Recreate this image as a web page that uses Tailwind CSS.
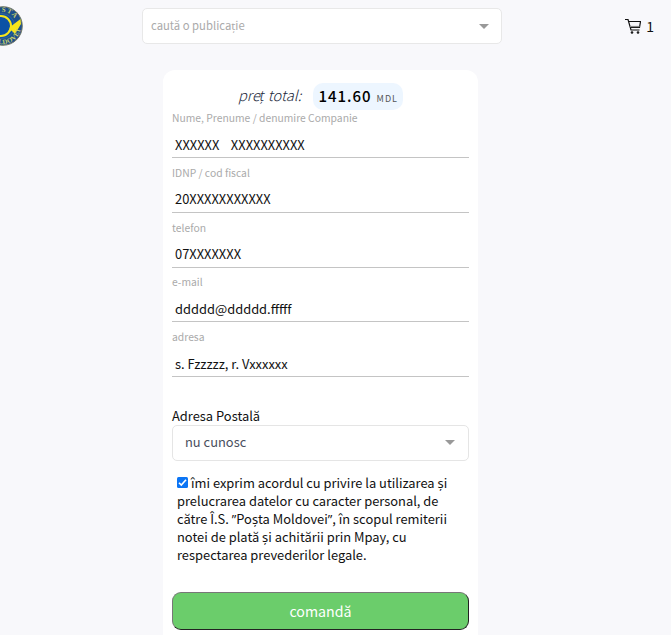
<!DOCTYPE html>
<html lang="ro">
  <head>
    <title>Poșta Moldovei</title>
    <meta charset="UTF-8" />
    <meta name="viewport" content="width=device-width, initial-scale=1.0" />
    <script src="https://cdn.jsdelivr.net/npm/@tailwindcss/browser@4"></script>
  </head>
  <body
    class="bg-[#f8f8fb] text-[#111] h-[635px] overflow-hidden font-['Noto_Sans_CJK_SC','Noto_Sans',sans-serif]"
  >
    <header class="flex h-[70px] items-start">
      <!-- Logo -->
      <div class="w-[142px] pt-[6px]">
        <svg class="-ml-[17px]" width="40" height="40" viewBox="0 0 40 40">
          <circle cx="20" cy="20" r="19.3" fill="#1c4f8c" stroke="#777c67" />
          <circle cx="19" cy="20" r="12.5" fill="#0c52a5" stroke="#496e8c" stroke-width=".7" />
          <circle cx="18" cy="20" r="10" fill="none" stroke="#f6e51b" stroke-width="2" />
          <path d="M27 21 37.5 13 38 18 32 28 28.5 24.5 25 27" fill="#f6e51b" />
          <path id="top" d="M5.5 20a14 14 0 0 1 28 0" fill="none" />
          <path id="bottom" d="M1.5 20a18.2 18.2 0 0 0 36.4 0" fill="none" />
          <g fill="#c9cf6a" font-family="Liberation Serif, serif" font-weight="bold" font-size="7">
            <text><textPath href="#top" startOffset="23" text-anchor="middle" letter-spacing="1">POSTA</textPath></text>
            <text><textPath href="#bottom" startOffset="32" text-anchor="middle" letter-spacing=".3">MOLDOVEI</textPath></text>
          </g>
        </svg>
      </div>

      <div
        class="mt-2 flex h-9 w-[360px] items-center justify-between rounded-[5px] border border-[#e8e8e8] bg-white pl-2 pr-3"
      >
        <span class="-mt-[2px] text-[11.3px] leading-4 text-[#aaa]">caută o publicație</span>
        <span class="border-x-[5px] border-t-[5px] border-x-transparent border-t-[#999]"></span>
      </div>

      <!-- Cart -->
      <div class="ml-auto mr-[17px] mt-[17px] flex items-start gap-[5px]">
        <svg class="mt-[2px]" width="16" height="16" viewBox="0 0 16 16" fill="none" stroke="#111" stroke-width="1.2">
          <path d="M0 .5h3l3 10.5h8.5M3.5 2.5h12l-1 6H5.5" />
          <path d="M5 7.5h9.5" stroke="#888" />
          <circle cx="7" cy="13.5" r="1" fill="#111" stroke-width=".6" />
          <circle cx="13" cy="13.5" r="1" fill="#111" stroke-width=".6" />
        </svg>
        <span class="-mt-px text-[14px] leading-5">1</span>
      </div>
    </header>

    <main class="ml-[163px] h-[565px] w-[315px] rounded-t-[12px] bg-white px-[9px] pt-[13px]">
      <div class="flex h-[27px] items-center justify-center gap-3">
        <span class="-mt-[3px] text-[14.6px] font-light italic leading-5 text-[#222a3c]">preț total:</span>
        <span class="flex h-[27px] items-baseline gap-[5px] rounded-[10px] bg-[#edf6ff] px-[5px] leading-[25px]">
          <span class="text-[15px] font-medium tracking-[1px] text-black">141.60</span>
          <span class="text-[9px] tracking-[1px] text-[#555]">MDL</span>
        </span>
      </div>

      <form>
        <div class="h-[54.75px]">
          <label class="block h-[15px] text-[10.35px] leading-[15px] text-[#aaa]">Nume, Prenume / denumire Companie</label>
          <div class="h-[33px] whitespace-pre border-b border-[#c4c4c4] pl-[3px] pt-[10px] text-[12.9px] leading-5">XXXXXX    XXXXXXXXXX</div>
        </div>
        <div class="h-[54.75px]">
          <label class="block h-[15px] text-[10.35px] leading-[15px] text-[#aaa]">IDNP / cod fiscal</label>
          <div class="h-[33px] border-b border-[#c4c4c4] pl-[3px] pt-[9px] text-[12.9px] leading-5">20XXXXXXXXXXX</div>
        </div>
        <div class="h-[54.75px]">
          <label class="block h-[15px] text-[10.35px] leading-[15px] text-[#aaa]">telefon</label>
          <div class="h-[33px] border-b border-[#c4c4c4] pl-[3px] pt-[9px] text-[12.9px] leading-5">07XXXXXXX</div>
        </div>
        <div class="h-[54.75px]">
          <label class="block h-[15px] text-[10.35px] leading-[15px] text-[#aaa]">e-mail</label>
          <div class="h-[33px] border-b border-[#c4c4c4] pl-[3px] pt-[10px] text-[12.9px] leading-5">ddddd@ddddd.fffff</div>
        </div>
        <div class="h-[54.75px]">
          <label class="block h-[15px] text-[10.35px] leading-[15px] text-[#aaa]">adresa</label>
          <div class="h-[33px] border-b border-[#c4c4c4] pl-[3px] pt-[10px] text-[12.9px] leading-5">s. Fzzzzz, r. Vxxxxxx</div>
        </div>

        <label class="mt-[23px] block h-[18px] text-[12.9px] leading-[18px]">Adresa Postală</label>
        <div
          class="flex h-9 items-center justify-between rounded-[5px] border border-[#e5e5e5] pl-3 pr-[13px]"
        >
          <span class="-mt-[2px] text-[12.9px] leading-5 text-[#4a4f5e]">nu cunosc</span>
          <span class="-mt-px border-x-[5px] border-t-[5px] border-x-transparent border-t-[#999]"></span>
        </div>

        <div class="mt-[13px] whitespace-nowrap pl-[5px] text-[12.9px] leading-[18px]">
          <div class="flex items-center gap-[3px]">
            <svg class="-mt-px" width="11" height="11" viewBox="0 0 11 11">
              <rect width="11" height="11" rx="1.5" fill="#0b75f5" />
              <path d="m2 5.7 2.3 2.4L9 2.8" fill="none" stroke="#fff" stroke-width="1.6" />
            </svg>
            <span>îmi exprim acordul cu privire la utilizarea și</span>
          </div>
          <p>prelucrarea datelor cu caracter personal, de</p>
          <p>către Î.S. <span class="font-['Open_Sans']">”</span>Poșta Moldovei<span class="font-['Open_Sans']">”</span>, în scopul remiterii</p>
          <p>notei de plată și achitării prin Mpay, cu</p>
          <p>respectarea prevederilor legale.</p>
        </div>

        <button
          type="button"
          class="mt-[28px] block h-[38px] w-full rounded-[9px] border border-b-[#222] border-l-[#777] border-r-[#222] border-t-[#777] bg-[#6bcd6b] text-[14.2px] leading-5 text-white"
        >
          comandă
        </button>
      </form>
    </main>
  </body>
</html>
